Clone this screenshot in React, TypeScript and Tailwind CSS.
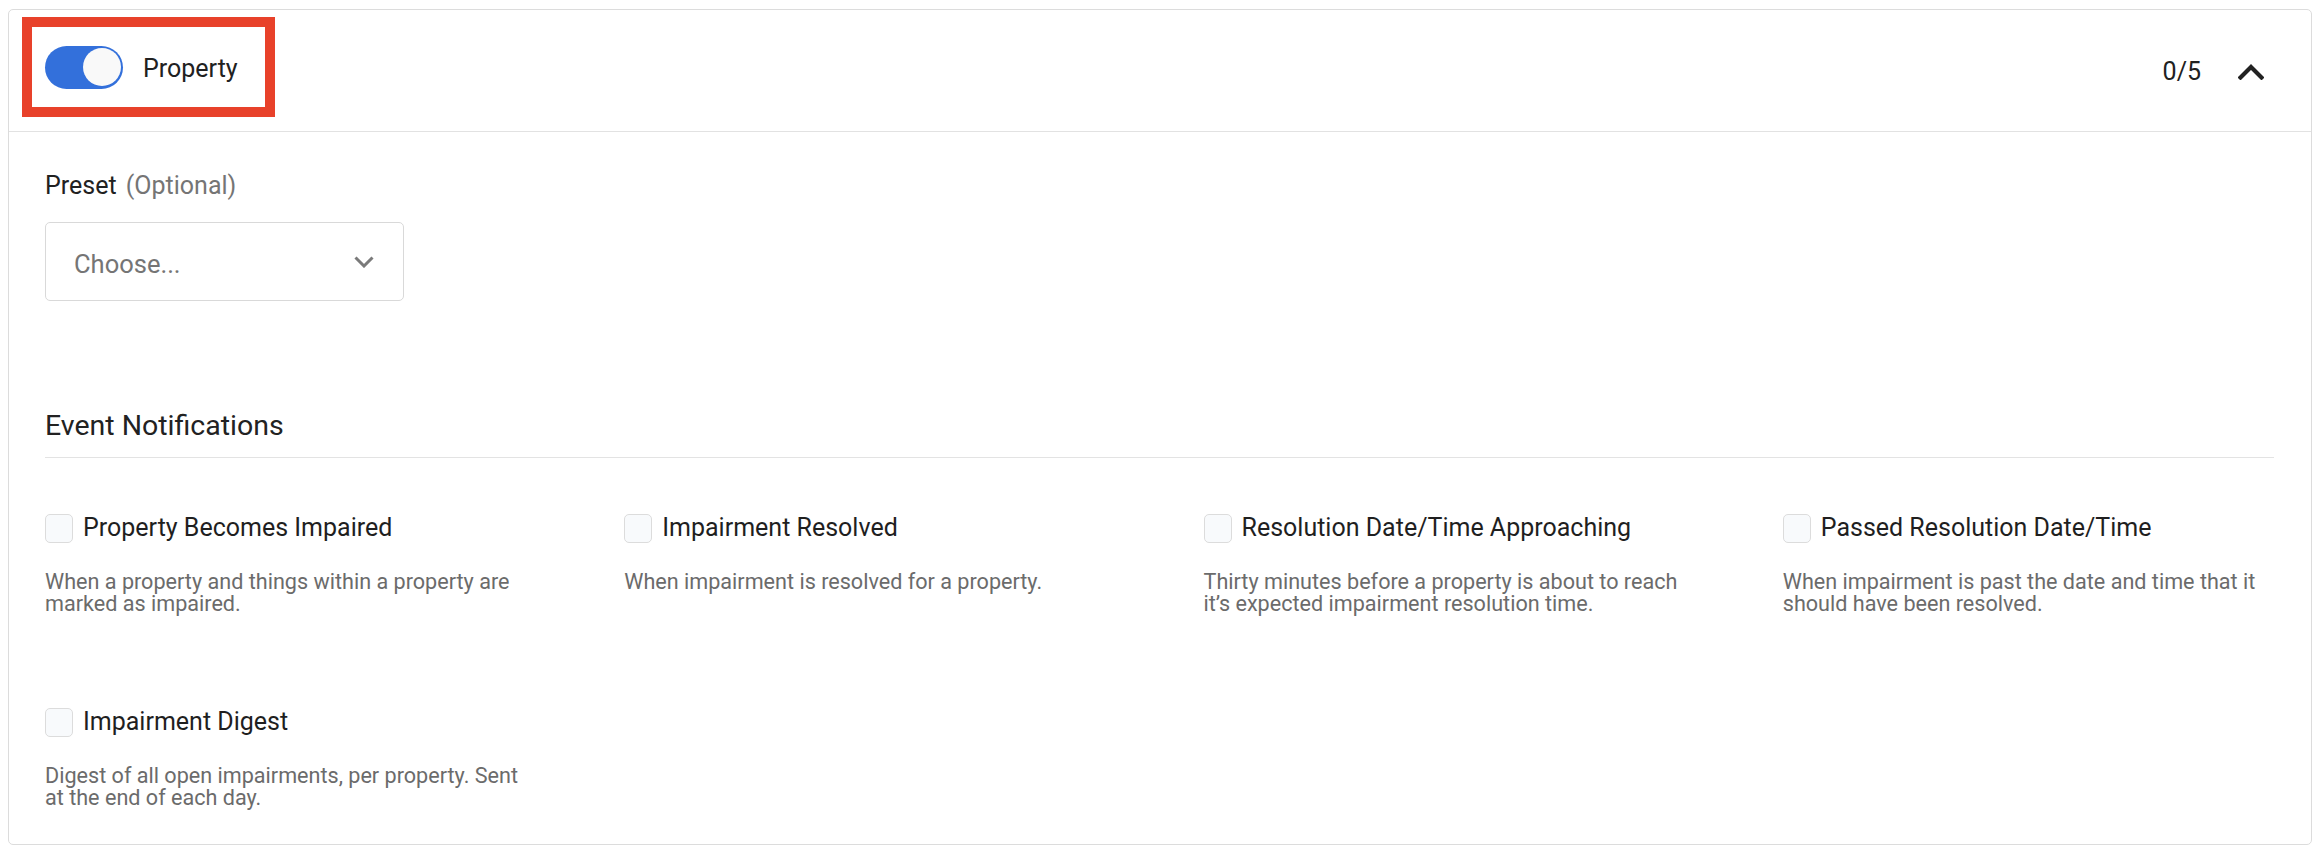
import { useState } from "react"

const events = [
  {
    title: "Property Becomes Impaired",
    description: "When a property and things within a property are marked as impaired.",
  },
  {
    title: "Impairment Resolved",
    description: "When impairment is resolved for a property.",
  },
  {
    title: "Resolution Date/Time Approaching",
    description: "Thirty minutes before a property is about to reach it’s expected impairment resolution time.",
  },
  {
    title: "Passed Resolution Date/Time",
    description: "When impairment is past the date and time that it should have been resolved.",
  },
  {
    title: "Impairment Digest",
    description: "Digest of all open impairments, per property. Sent at the end of each day.",
  },
]

const Toggle = ({ on, onChange }: { on: boolean; onChange: () => void }) => (
  <button
    onClick={onChange}
    className={`relative flex h-[43px] w-[78px] items-center rounded-full px-[2px] ${on ? "justify-end bg-[#3370db]" : "justify-start bg-[#cfd3d8]"}`}
  >
    <span className="block h-[38px] w-[38px] rounded-full bg-[#f9f9f9]" />
  </button>
)

export default function App() {
  const [enabled, setEnabled] = useState(true)
  const [checked, setChecked] = useState<boolean[]>(events.map(() => false))

  return (
    <div className="min-h-screen bg-white pl-[8px] pt-[9px] font-['Roboto',sans-serif] text-[#212121]">
      <div className="w-[2304px] rounded-[5px] border border-[#dcdcdc]">
        {/* header */}
        <div className="flex h-[122px] items-start justify-between border-b border-[#e2e2e2]">
          <div className="ml-[13px] mt-[7px] flex h-[100px] w-[253px] items-center border-[10px] border-[#e8412a] pl-[13px]">
            <Toggle on={enabled} onChange={() => setEnabled(!enabled)} />
            <span className="ml-[20px] pt-[4px] text-[25px] leading-[36px]">Property</span>
          </div>
          <div className="mr-[47px] flex h-full items-center gap-[37px] pt-[2px]">
            <span className="text-[25px] leading-[36px]">0/5</span>
            <svg width="26" height="16" viewBox="0 0 26 16" fill="none">
              <path d="M2.5 13.5 L13 3 L23.5 13.5" stroke="#222" strokeWidth="4.2" strokeLinecap="square" />
            </svg>
          </div>
        </div>

        {/* body */}
        <div className="pb-[35px] pl-[36px] pr-[37px] pt-[36px]">
          <div className="text-[25px] leading-[36px]">
            Preset <span className="ml-[3px] text-[#757575]">(Optional)</span>
          </div>
          <div className="mt-[18px] flex h-[79px] w-[359px] items-center justify-between rounded-[5px] border border-[#d9d9d9] pl-[28px] pr-[29px]">
            <span className="pt-[5px] text-[25.5px] text-[#757575]">Choose...</span>
            <svg width="20" height="12" viewBox="0 0 20 12" fill="none">
              <path d="M1.5 1.5 L10 10 L18.5 1.5" stroke="#7a7a7a" strokeWidth="3" />
            </svg>
          </div>

          <div className="mt-[105px] border-b border-[#e3e3e3] pb-[13px] pt-[2px] text-[28.5px] leading-[36px] text-[#222]">
            Event Notifications
          </div>

          <div className="mt-[52px] grid grid-cols-4 gap-x-[88px] gap-y-[89px]">
            {events.map((e, i) => (
              <div key={e.title}>
                <label className="flex cursor-pointer items-center gap-[10px]">
                  <input
                    type="checkbox"
                    className="sr-only"
                    checked={checked[i]}
                    onChange={() => setChecked(checked.map((c, j) => (j === i ? !c : c)))}
                  />
                  <span
                    className={`block h-[29px] w-[28px] rounded-[5px] border ${checked[i] ? "border-[#3370db] bg-[#3370db]" : "border-[#dcdcdc] bg-[#f8fafc]"}`}
                  />
                  <span className="text-[25px] leading-[36px] text-[#1f1f1f]">{e.title}</span>
                </label>
                <p className="mt-[25px] text-[21.6px] leading-[22px] text-[#6b6b6b]">{e.description}</p>
              </div>
            ))}
          </div>
        </div>
      </div>
    </div>
  )
}
